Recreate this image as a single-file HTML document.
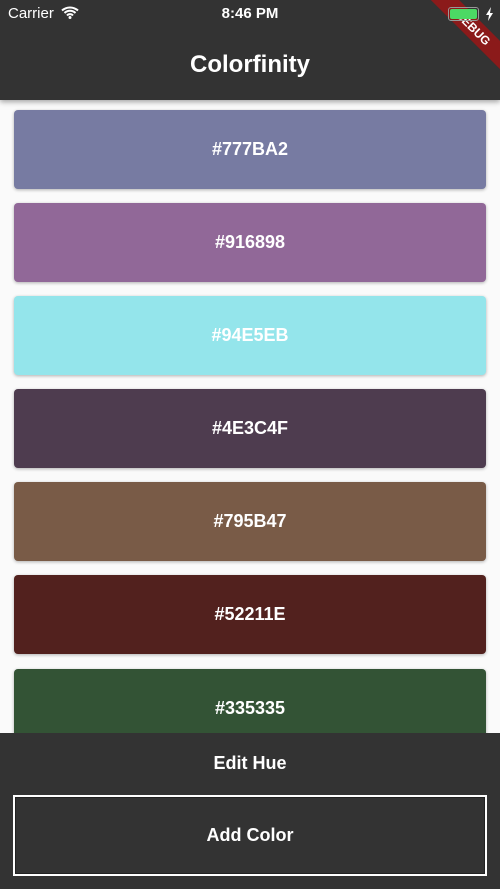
<!DOCTYPE html>
<html><head><meta charset="utf-8"><style>
*{margin:0;padding:0;box-sizing:border-box}
body{width:500px;height:889px;overflow:hidden;background:#fafafa;font-family:"Liberation Sans",sans-serif;position:relative}
.bar{position:absolute;left:0;top:0;width:500px;height:100px;background:#333;box-shadow:0 2px 5px rgba(0,0,0,.35);z-index:2}
.st{position:absolute;top:5px;color:#fff;font-size:15px}
.title{position:absolute;top:51px;width:100%;text-align:center;color:#fff;font-size:24px;font-weight:bold}
.card{position:absolute;left:14px;width:472px;height:79px;border-radius:4px;color:#fff;font-size:18px;font-weight:bold;display:flex;align-items:center;justify-content:center;box-shadow:0 1px 3px rgba(0,0,0,.3)}
.bot{position:absolute;left:0;top:733px;width:500px;height:156px;background:#333;z-index:3}
.eh{position:absolute;top:20px;width:100%;text-align:center;color:#fff;font-size:18px;font-weight:bold}
.ac{position:absolute;left:13px;top:62px;width:474px;height:81px;border:2px solid #fff;box-shadow:inset 0 0 0 1px #222;display:flex;align-items:center;justify-content:center;color:#fff;font-size:18px;font-weight:bold}
.dbg{position:absolute;right:-36px;top:18px;width:126px;height:20px;background:#8b1a1a;transform:rotate(45deg);color:#fff;font-size:12px;font-weight:bold;text-align:center;line-height:20px;z-index:5}
.bat{position:absolute;z-index:6}
</style></head><body>
<div class="bar">
<div class="st" style="left:8px">Carrier
<svg width="18" height="13" viewBox="0 0 18 13" style="vertical-align:-1px;margin-left:3px"><path d="M1 4.5A12 12 0 0 1 17 4.5M3.5 7A8 8 0 0 1 14.5 7M6 9.5A4 4 0 0 1 12 9.5" stroke="#fff" stroke-width="2" fill="none"/><circle cx="9" cy="11.5" r="1.5" fill="#fff"/></svg></div>
<div class="st" style="left:0;width:500px;text-align:center;font-weight:bold">8:46 PM</div>
<div class="title">Colorfinity</div>
</div>
<div class="dbg">DEBUG</div>
<div class="bat" style="left:448px;top:7px;width:31px;height:14px;border:1px solid #999;border-radius:3px;padding:1px"><div style="width:100%;height:100%;background:#4cd964;border-radius:2px"></div></div>
<svg class="bat" style="left:485px;top:7px" width="9" height="14" viewBox="0 0 9 14"><path d="M6 0L1 8h3l-1 6 5-8H5z" fill="#fff"/></svg>
<div class="card" style="top:110px;background:#777BA2">#777BA2</div>
<div class="card" style="top:203px;background:#916898">#916898</div>
<div class="card" style="top:296px;background:#94E5EB">#94E5EB</div>
<div class="card" style="top:389px;background:#4E3C4F">#4E3C4F</div>
<div class="card" style="top:482px;background:#795B47">#795B47</div>
<div class="card" style="top:575px;background:#52211E">#52211E</div>
<div class="card" style="top:669px;background:#335335">#335335</div>
<div class="bot"><div class="eh">Edit Hue</div><div class="ac">Add Color</div></div>
</body></html>
